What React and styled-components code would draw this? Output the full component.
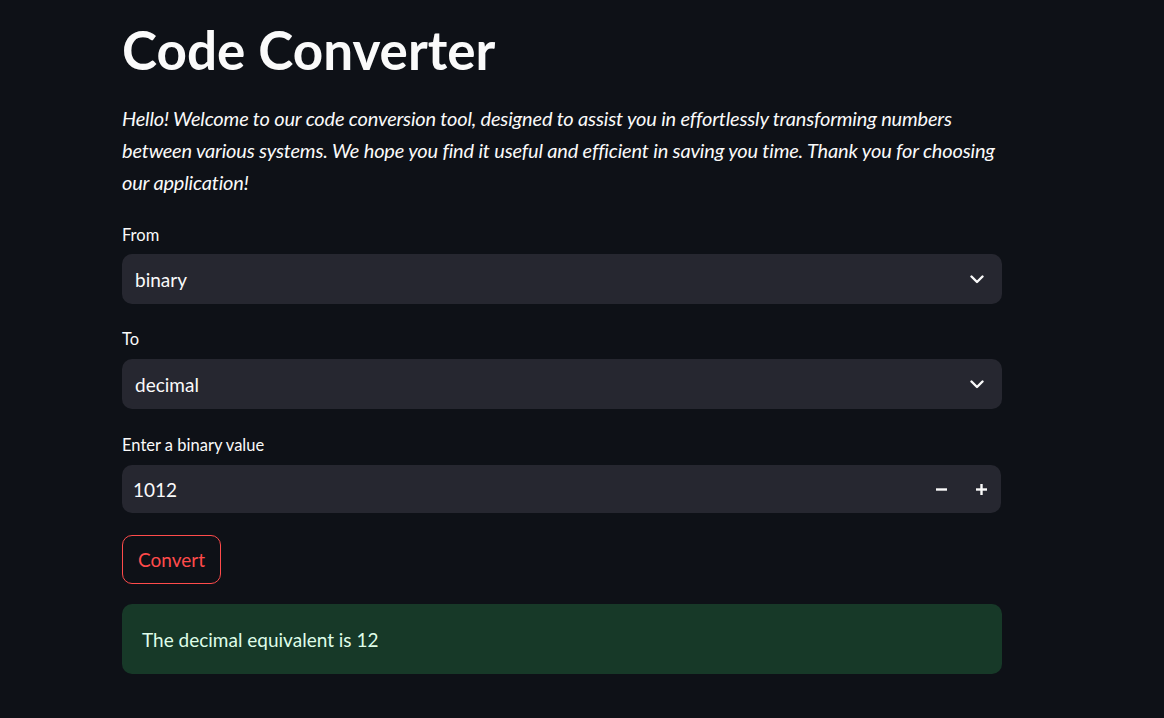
import React from "react";
import styled, { createGlobalStyle } from "styled-components";

const GlobalStyle = createGlobalStyle`
  body {
    margin: 0;
    background: #0e1117;
    color: #fafafa;
    font-family: Lato, "Noto Sans", sans-serif;
  }
`;

const Page = styled.main`
  width: 880px;
  padding: 12px 0 40px 122px;
  display: flex;
  flex-direction: column;
`;

const Title = styled.h1`
  margin: 0;
  font-size: 53px;
  font-weight: 700;
  line-height: 76px;
`;

const Intro = styled.p`
  margin: 14px 0 0;
  font-size: 20px;
  font-style: italic;
  line-height: 32px;
  letter-spacing: -0.18px;
`;

const Field = styled.div`
  display: flex;
  flex-direction: column;
  margin-top: ${({ gap }) => gap}px;
`;

const Label = styled.label`
  font-size: 16.5px;
  line-height: 22px;
  margin-bottom: ${({ tight }) => (tight ? 8 : 9)}px;
`;

const Select = styled.div`
  height: 50px;
  background: #262730;
  border-radius: 10px;
  display: flex;
  align-items: center;
  justify-content: space-between;
  padding: 0 18px 0 13px;
  font-size: 19px;
`;

const NumberBox = styled.div`
  height: 48px;
  margin-right: 1px;
  background: #262730;
  border-radius: 10px;
  display: flex;
  align-items: center;
  padding-left: 11px;
  font-size: 19px;
`;

const Value = styled.span`
  flex: 1;
`;

const Step = styled.button`
  width: 40px;
  height: 48px;
  border: none;
  background: transparent;
  color: #fafafa;
  display: flex;
  align-items: center;
  justify-content: center;
  padding: 0;
`;

const Button = styled.button`
  align-self: flex-start;
  margin-top: 22px;
  height: 49px;
  padding: 0 15px;
  background: transparent;
  border: 1px solid #ff4b4b;
  border-radius: 10px;
  color: #ff4b4b;
  font-family: inherit;
  font-size: 19px;
`;

const Alert = styled.div`
  margin-top: 20px;
  height: 70px;
  background: #173928;
  border-radius: 10px;
  display: flex;
  align-items: center;
  padding-left: 20px;
  color: #dffde9;
  font-size: 19px;
`;

const Chevron = () => (
  <svg width="14" height="9" viewBox="0 0 14 9">
    <path d="M1.5 1.5 L7 7 L12.5 1.5" stroke="#fafafa" strokeWidth="2.4" fill="none" strokeLinecap="round" strokeLinejoin="round" />
  </svg>
);

const Minus = () => (
  <svg width="11" height="11" viewBox="0 0 11 11">
    <rect x="0" y="4.3" width="11" height="2.4" fill="#fafafa" />
  </svg>
);

const Plus = () => (
  <svg width="11" height="11" viewBox="0 0 11 11">
    <rect x="0" y="4.3" width="11" height="2.4" fill="#fafafa" />
    <rect x="4.3" y="0" width="2.4" height="11" fill="#fafafa" />
  </svg>
);

export default function App() {
  return (
    <>
      <GlobalStyle />
      <Page>
        <Title>Code Converter</Title>
        <Intro>
          Hello! Welcome to our code conversion tool, designed to assist you in effortlessly transforming numbers
          between various systems. We hope you find it useful and efficient in saving you time. Thank you for choosing
          our application!
        </Intro>
        <Field gap={26}>
          <Label tight>From</Label>
          <Select>
            <span>binary</span>
            <Chevron />
          </Select>
        </Field>
        <Field gap={24}>
          <Label>To</Label>
          <Select>
            <span>decimal</span>
            <Chevron />
          </Select>
        </Field>
        <Field gap={25}>
          <Label>Enter a binary value</Label>
          <NumberBox>
            <Value>1012</Value>
            <Step><Minus /></Step>
            <Step><Plus /></Step>
          </NumberBox>
        </Field>
        <Button>Convert</Button>
        <Alert>The decimal equivalent is 12</Alert>
      </Page>
    </>
  );
}
